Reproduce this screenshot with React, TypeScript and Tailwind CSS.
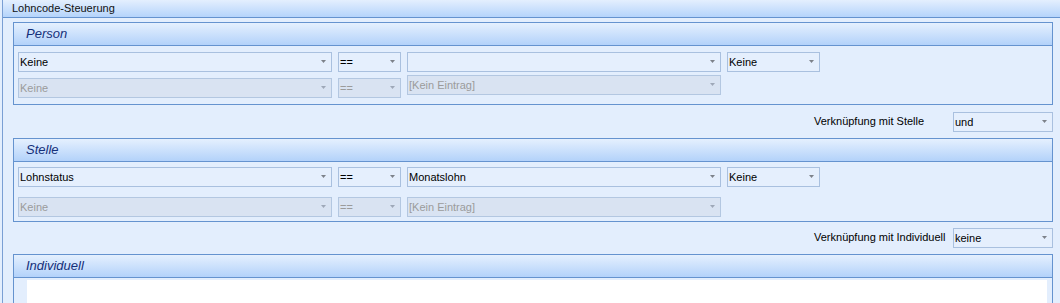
import React from "react";

interface ComboProps {
  text?: string;
  disabled?: boolean;
  className?: string;
}

const Combo: React.FC<ComboProps> = ({ text, disabled, className }) => {
  return (
    <div
      className={`flex items-center h-[20px] border pl-[1px] pr-[5px] ${
        disabled
          ? "border-[#b3c7e1] bg-[#d9e3f2] text-[#9b9b9b]"
          : "border-[#a9c0df] bg-[#e5effd] text-black"
      } ${className ?? ""}`}
    >
      <span className="flex-1 truncate leading-[18px]">{text}</span>
      <svg width="5" height="3" viewBox="0 0 5 3" className="shrink-0">
        <path d="M0 0H5L2.5 3Z" fill={disabled ? "#9ea8b8" : "#7d828a"} />
      </svg>
    </div>
  );
};

const GroupHeader = ({ title }: { title: string }) => (
  <div className="h-[23px] border-b border-[#6593cf] bg-gradient-to-b from-[#e5f0fe] to-[#b3d2fa] pl-[12px] flex items-center">
    <span className="italic text-[13px] text-[#15307a]">{title}</span>
  </div>
);

const LinkRow = ({ label, value, className }: { label: string; value: string; className?: string }) => (
  <div className={`flex justify-end items-center ${className ?? ""}`}>
    <span className="w-[139px] text-[11px] text-black">{label}</span>
    <Combo text={value} className="w-[100px]" />
  </div>
);

export default function App() {
  return (
    <div
      className="w-[1060px] h-[303px] overflow-hidden bg-[#e3eefd] text-[11px]"
      style={{ fontFamily: '"Liberation Sans", Arial, sans-serif' }}
    >
      <div className="ml-[2px] h-full border-l border-[#7a9fd4] flex flex-col">
        <div className="h-[19px] border-b border-[#6593cf] bg-gradient-to-b from-[#e4effe] to-[#b5d4fb] pl-[9px] flex items-center">
          <span className="text-[11px] text-[#111]">Lohncode-Steuerung</span>
        </div>

        <div className="ml-[10px] w-[1040px] flex flex-col">
          {/* Person */}
          <div className="mt-[4px] border border-[#6593cf]">
            <GroupHeader title="Person" />
            <div className="pl-[4px] pt-[6px] pb-[6px] flex flex-col gap-[6px]">
              <div className="flex gap-[6px]">
                <Combo text="Keine" className="w-[314px]" />
                <Combo text="==" className="w-[63px]" />
                <Combo text="" className="w-[314px]" />
                <Combo text="Keine" className="w-[93px]" />
              </div>
              <div className="flex gap-[6px] items-start">
                <Combo text="Keine" disabled className="w-[314px]" />
                <Combo text="==" disabled className="w-[63px]" />
                <Combo text="[Kein Eintrag]" disabled className="w-[314px] -mt-[3px]" />
              </div>
            </div>
          </div>

          <LinkRow label="Verknüpfung mit Stelle" value="und" className="mt-[7px]" />

          {/* Stelle */}
          <div className="mt-[6px] border border-[#6593cf]">
            <GroupHeader title="Stelle" />
            <div className="pl-[4px] pt-[5px] pb-[4px] flex flex-col gap-[10px]">
              <div className="flex gap-[6px]">
                <Combo text="Lohnstatus" className="w-[314px]" />
                <Combo text="==" className="w-[63px]" />
                <Combo text="Monatslohn" className="w-[314px]" />
                <Combo text="Keine" className="w-[93px]" />
              </div>
              <div className="flex gap-[6px]">
                <Combo text="Keine" disabled className="w-[314px]" />
                <Combo text="==" disabled className="w-[63px]" />
                <Combo text="[Kein Eintrag]" disabled className="w-[314px]" />
              </div>
            </div>
          </div>

          <LinkRow label="Verknüpfung mit Individuell" value="keine" className="mt-[6px] pl-[1px]" />

          {/* Individuell */}
          <div className="mt-[6px] border border-[#6593cf] h-[60px]">
            <GroupHeader title="Individuell" />
            <div className="pl-[13px] pr-[5px] pt-[2px]">
              <div className="h-[40px] bg-white" />
            </div>
          </div>
        </div>
      </div>
    </div>
  );
}
